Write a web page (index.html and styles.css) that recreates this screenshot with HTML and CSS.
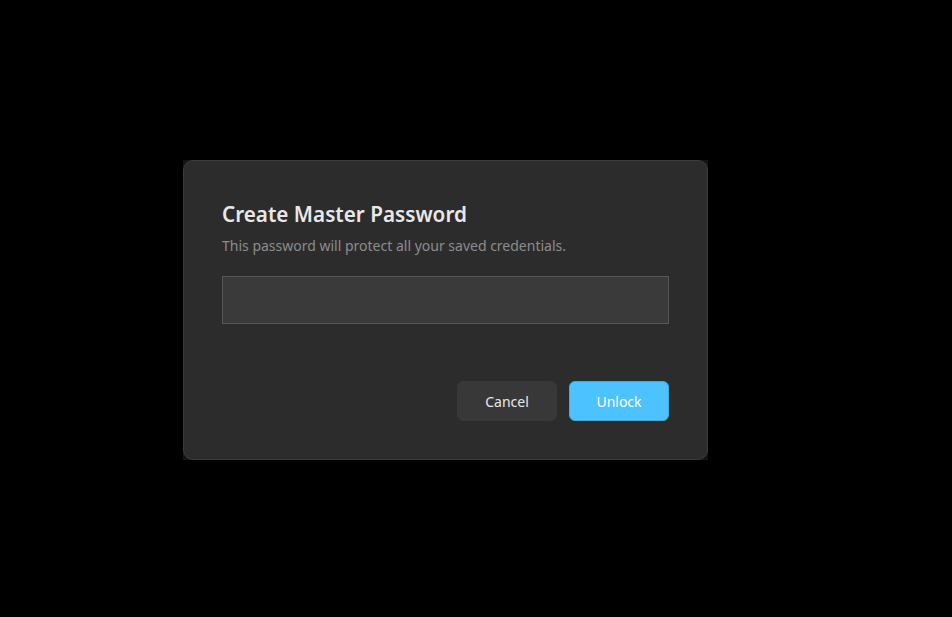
FILE: index.html
```html
<!DOCTYPE html>
<html lang="en">
<head>
<meta charset="utf-8">
<title>Create Master Password</title>
<link rel="stylesheet" href="styles.css">
</head>
<body>
<div class="stage">
  <div class="backdrop">
    <div class="dialog">
      <h1 class="title">Create Master Password</h1>
      <p class="subtitle">This password will protect all your saved credentials.</p>
      <input class="field" type="password" aria-label="Master password">
      <div class="actions">
        <button class="btn btn-secondary" type="button">Cancel</button>
        <button class="btn btn-primary" type="button">Unlock</button>
      </div>
    </div>
  </div>
</div>
</body>
</html>
```

FILE: styles.css
```css
html, body {
  margin: 0;
  padding: 0;
  background: #000000;
  height: 100%;
}

body {
  font-family: "Noto Sans", "Open Sans", "Liberation Sans", sans-serif;
  color: #e6e6e6;
}

.stage {
  padding: 160px 0 0 183px;
}

.backdrop {
  width: 525px;
  height: 300px;
  background: #141414;
}

.dialog {
  box-sizing: border-box;
  height: 100%;
  background: #2c2c2c;
  border: 1px solid #3c3c3c;
  border-radius: 10px;
  padding: 38px;
  display: flex;
  flex-direction: column;
}

.title {
  margin: 0;
  font-size: 20.7px;
  line-height: 31px;
  font-weight: 600;
  color: #e8e8e8;
}

.subtitle {
  margin: 6px 0 0;
  font-size: 14px;
  line-height: 20px;
  color: #8c8c8c;
}

.field {
  box-sizing: border-box;
  display: block;
  width: 100%;
  height: 48px;
  margin: 20px 0 0;
  background: #3a3a3a;
  border: 1px solid #575757;
  border-radius: 0;
  outline: none;
  padding: 0 12px;
  color: #e6e6e6;
  font: inherit;
}

.actions {
  margin-top: auto;
  display: flex;
  justify-content: flex-end;
  gap: 12px;
}

.btn {
  width: 100px;
  height: 40px;
  border-radius: 6px;
  font-family: inherit;
  font-size: 14px;
  cursor: pointer;
}

.btn-secondary {
  background: #383838;
  border: 1px solid #383838;
  color: #e8e8e8;
}

.btn-primary {
  background: #4cc2ff;
  border: 1px solid #42a8dc;
  color: #ffffff;
}
```
